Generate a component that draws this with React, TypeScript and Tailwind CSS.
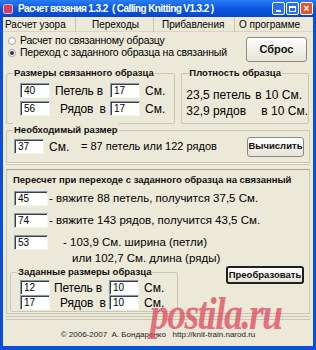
const sans = "font-['Liberation_Sans',Arial,sans-serif]";

function Field({ value, w = "w-[30px]" }: { value: string; w?: string }) {
  return (
    <div
      className={`${w} h-[15px] shrink-0 bg-white border-t border-l border-t-[#7f9db9] border-l-[#7f9db9] border-b border-r border-b-[#f4f4f0] border-r-[#f4f4f0] shadow-[inset_1px_1px_0_#404040] text-[10px] leading-[14px] pl-[3px] text-black`}
    >
      {value}
    </div>
  );
}

function Radio({ checked, label }: { checked?: boolean; label: string }) {
  return (
    <div className="flex items-center gap-[4px] h-[12px]">
      <div className="w-[8px] h-[8px] rounded-full bg-white border border-[#a0a0a0] flex items-center justify-center">
        {checked && <div className="w-[4px] h-[4px] rounded-full bg-[#303030]" />}
      </div>
      <span className="text-[10.5px] tracking-[-0.2px] whitespace-nowrap text-black">{label}</span>
    </div>
  );
}

function XpButton({
  label,
  className,
  focused,
}: {
  label: string;
  className: string;
  focused?: boolean;
}) {
  return (
    <div
      className={`${className} rounded-[3px] ${
        focused ? "border-2 border-[#202020]" : "border border-[#8a8a80]"
      } bg-gradient-to-b from-[#ffffff] to-[#e6e3d6] flex items-center justify-center font-bold text-[#111] whitespace-nowrap`}
    >
      {label}
    </div>
  );
}

function Group({
  legend,
  className,
  children,
}: {
  legend: string;
  className: string;
  children: React.ReactNode;
}) {
  return (
    <div className={`relative border border-[#c9c6b6] rounded-[2px] ${className}`}>
      <span className="absolute -top-[8px] left-[6px] px-[1px] bg-[#ece9d8] text-[9.5px] font-bold text-[#111] leading-[14px] whitespace-nowrap">
        {legend}
      </span>
      {children}
    </div>
  );
}

export default function App() {
  return (
    <div className={`w-[316px] h-[350px] bg-[#0a4fd8] flex flex-col ${sans}`}>
      {/* Title bar */}
      <div className="h-[17px] flex items-center px-[3px] bg-gradient-to-b from-[#2a7cf5] via-[#0a58e2] to-[#0846c6]">
        <div className="w-[10px] h-[10px] mr-[5px] rounded-[2px] bg-[#d23d6d] border border-[#f5b0c0]" />
        <span className="text-white text-[10px] font-bold tracking-[-0.6px] whitespace-nowrap">
          Расчет вязания 1.3.2 &nbsp;( Calling Knitting V1.3.2 )
        </span>
        <div className="ml-auto flex gap-[1px]">
          <div className="w-[13px] h-[13px] rounded-[2px] border border-white bg-[#2f6cf0] flex items-end justify-center pb-[2px]">
            <div className="w-[5px] h-[2px] bg-white" />
          </div>
          <div className="w-[13px] h-[13px] rounded-[2px] border border-white bg-[#2f6cf0] flex items-center justify-center">
            <div className="w-[7px] h-[6px] border border-white border-t-2" />
          </div>
          <div className="w-[13px] h-[13px] rounded-[2px] border border-white bg-[#e0552f] flex items-center justify-center text-white text-[10px] font-bold leading-none">
            ×
          </div>
        </div>
      </div>

      <div className="flex-1 mx-[3px] mb-[4px] bg-[#ece9d8] flex flex-col relative overflow-hidden">
        {/* Menu */}
        <div className="h-[15px] flex items-center text-[10px] text-black border-b border-[#d8d4c4] whitespace-nowrap">
          <div className="w-[73px] pl-[2px] border-r border-[#c8c4b4]">Расчет узора</div>
          <div className="w-[78px] pl-[16px] border-r border-[#c8c4b4]">Переходы</div>
          <div className="w-[81px] pl-[8px] border-r border-[#c8c4b4]">Прибавления</div>
          <div className="pl-[4px]">О программе</div>
        </div>

        {/* Radios + reset */}
        <div className="flex items-start h-[41px]">
          <div className="flex flex-col pl-[5px] pt-[3px]">
            <Radio label="Расчет по связанному образцу" />
            <Radio checked label="Переход с заданного образца на связанный" />
          </div>
          <XpButton label="Сброс" className="ml-auto mr-[6px] mt-[5px] w-[61px] h-[25px] text-[11px]" />
        </div>

        {/* Sample + density */}
        <div className="flex mx-[3px] gap-[6px]">
          <Group legend="Размеры связанного образца" className="w-[172px] h-[51px]">
            <div className="flex flex-col gap-[3px] pl-[13px] pt-[9px] text-[12px] text-black whitespace-nowrap">
              <div className="flex items-center h-[15px]">
                <Field value="40" />
                <span className="ml-[5px] w-[55px] tracking-[-0.2px]">Петель в</span>
                <Field value="17" />
                <span className="ml-[5px]">См.</span>
              </div>
              <div className="flex items-center h-[15px]">
                <Field value="56" />
                <span className="ml-[10px] w-[50px] tracking-[-0.2px]">Рядов &nbsp;в</span>
                <Field value="17" />
                <span className="ml-[5px]">См.</span>
              </div>
            </div>
          </Group>
          <Group legend="Плотность образца" className="flex-1 h-[51px] mr-[1px]">
            <div className="flex flex-col pl-[4px] pt-[13px] text-[12px] leading-[16px] text-black whitespace-nowrap">
              <div className="flex">
                <span className="w-[69px]">23,5 петель</span>
                <span>в 10 См.</span>
              </div>
              <div className="flex">
                <span className="w-[75px]">32,9 рядов</span>
                <span>в 10 См.</span>
              </div>
            </div>
          </Group>
        </div>

        {/* Needed size */}
        <Group legend="Необходимый размер" className="mx-[3px] mt-[6px] h-[32px] border-b-0 rounded-b-none">
          <div className="flex items-center h-full pl-[7px] text-[11px] text-black whitespace-nowrap">
            <Field value="37" />
            <span className="ml-[5px] w-[32px] text-[12px]">См.</span>
            <span>= 87 петель или 122 рядов</span>
            <XpButton label="Вычислить" className="ml-auto mr-[5px] w-[57px] h-[20px] text-[9.5px]" />
          </div>
        </Group>
        <div className="mx-[3px] h-[3px] border-t border-b border-[#c9c6b6] bg-white/50" />

        {/* Recalc */}
        <div className="mx-[3px] mt-[4px] h-[145px] border border-[#c9c6b6] border-t-[#a9a696] flex flex-col">
          <div className="text-[9.5px] font-bold text-[#111] pl-[6px] pt-[3px] leading-[14px] whitespace-nowrap">
            Пересчет при переходе с заданного образца на связанный
          </div>
          <div className="flex flex-col gap-[7px] pl-[7px] pt-[4px] text-[11.5px] text-black whitespace-nowrap">
            <div className="flex items-center h-[15px]">
              <Field value="45" w="w-[34px]" />
              <span className="ml-[1px]">- вяжите 88 петель, получится 37,5 См.</span>
            </div>
            <div className="flex items-center h-[15px]">
              <Field value="74" w="w-[34px]" />
              <span className="ml-[1px]">- вяжите 143 рядов, получится 43,5 См.</span>
            </div>
            <div className="flex flex-col">
              <div className="flex items-center h-[15px]">
                <Field value="53" w="w-[34px]" />
                <span className="ml-[15px]">- 103,9 См. ширина (петли)</span>
              </div>
              <div className="pl-[58px] leading-[17px]">или 102,7 См. длина (ряды)</div>
            </div>
          </div>
          <div className="flex mt-[5px] pl-[3px]">
            <Group legend="Заданные размеры образца" className="w-[168px] h-[40px]">
              <div className="flex flex-col pl-[9px] pt-[7px] text-[12px] text-black whitespace-nowrap">
                <div className="flex items-center h-[15px]">
                  <Field value="12" />
                  <span className="ml-[4px] w-[55px] tracking-[-0.2px]">Петель в</span>
                  <Field value="10" />
                  <span className="ml-[5px]">См.</span>
                </div>
                <div className="flex items-center h-[15px]">
                  <Field value="17" />
                  <span className="ml-[10px] w-[49px] tracking-[-0.2px]">Рядов &nbsp;в</span>
                  <Field value="10" />
                  <span className="ml-[5px]">См.</span>
                </div>
              </div>
            </Group>
            <XpButton
              focused
              label="Преобразовать"
              className="ml-auto mr-[5px] -mt-[6px] w-[78px] h-[18px] text-[9.5px]"
            />
          </div>
        </div>
        <div className="mx-[3px] mt-[2px] h-[4px] border-t border-b border-[#c9c6b6]" />

        {/* Footer */}
        <div className="flex-1 flex items-center justify-center text-[8px] text-[#222] pt-[4px] whitespace-nowrap">
          © 2006-2007 &nbsp;А. Бондаренко &nbsp;&nbsp;http://knit-train.narod.ru
        </div>

        {/* Watermark */}
        <div className="absolute left-[147px] top-[274px] text-[46px] font-bold italic text-[#e0485e]/75 font-['Liberation_Serif',serif] tracking-[-2px] scale-x-[0.82] origin-left leading-none pointer-events-none">
          postila.ru
        </div>
      </div>
    </div>
  );
}
